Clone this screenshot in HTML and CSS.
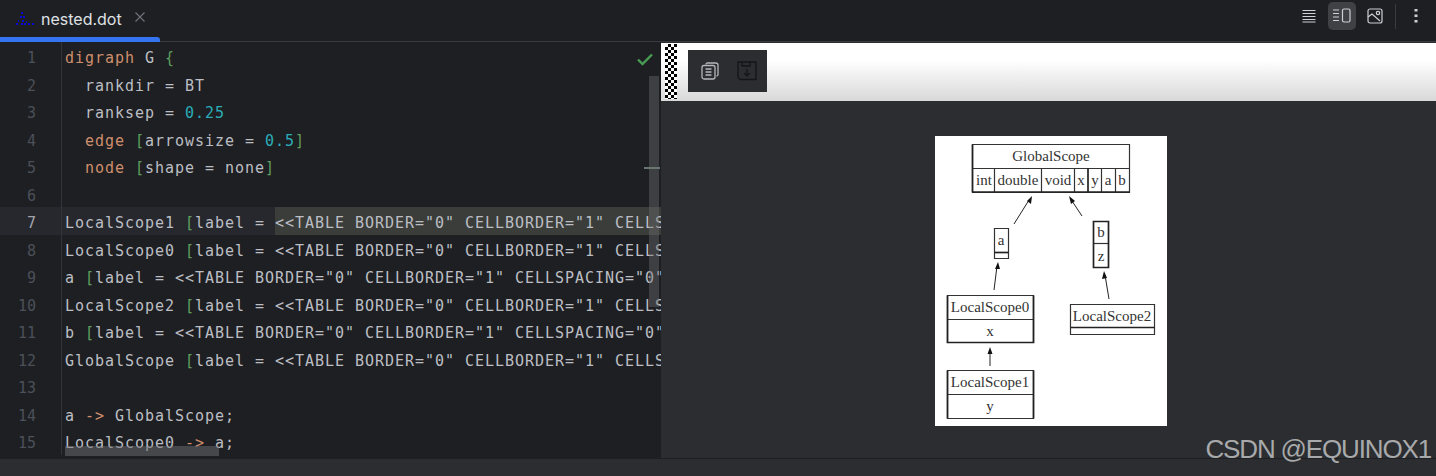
FILE: index.html
```html
<!DOCTYPE html>
<html lang="en">
<head>
    <meta charset="UTF-8">
    <title>nested.dot</title>
    <link rel="stylesheet" href="styles.css">
</head>
<body>
    <div class="app">
        <div class="tabbar">
            <div class="tab">
                <svg class="tab-icon" width="20" height="14" viewBox="0 0 20 14" fill="#0b0bd8">
                    <rect x="6" y="0" width="2" height="2"/><rect x="5" y="4" width="2" height="2"/><rect x="8" y="4" width="2" height="2"/>
                    <rect x="3" y="8" width="1" height="2"/><rect x="7" y="8" width="2" height="2"/><rect x="11" y="9" width="1" height="2"/>
                    <rect x="1" y="11" width="2" height="2"/><rect x="6" y="11" width="2" height="2"/><rect x="9" y="11" width="2" height="2"/><rect x="13" y="11" width="2" height="2"/><rect x="17" y="11" width="2" height="2"/>
                </svg>
                <span class="tab-name">nested.dot</span>
                <svg class="tab-close" width="10" height="10" viewBox="0 0 10 10" fill="none" stroke="#6f737a" stroke-width="1.1"><path d="M.5.5l9 9M9.500.5l-9 9"/></svg>
            </div>
            <div class="view-tools">
                <button class="tool">
                    <svg width="14" height="14" viewBox="0 0 14 14" stroke="#ced0d6" stroke-width="1.2"><path d="M.5 1.500h13M.5 4.500h13M.5 7.500h13M.5 10.500h13M.5 13h13"/></svg>
                </button>
                <button class="tool active">
                    <svg width="18" height="16" viewBox="0 0 18 16" fill="none" stroke="#ced0d6" stroke-width="1.2"><path d="M0 2h6M0 5.500h6M0 9h6M0 12.500h6"/><rect x="9.500" y="1" width="7.500" height="13" rx="1.500"/></svg>
                </button>
                <button class="tool">
                    <svg width="16" height="16" viewBox="0 0 16 16" fill="none" stroke="#ced0d6" stroke-width="1.2"><rect x="1" y="1" width="14" height="14" rx="2"/><path d="M1 9l4-3 8 7"/><circle cx="11" cy="5" r="1.700"/></svg>
                </button>
                <span class="tool-sep"></span>
                <button class="tool">
                    <svg width="4" height="14" viewBox="0 0 4 14" fill="#ced0d6"><rect x=".5" y="0" width="3" height="2.500"/><rect x=".5" y="5.500" width="3" height="2.500"/><rect x=".5" y="11" width="3" height="2.500"/></svg>
                </button>
            </div>
        </div>

        <div class="main">
            <div class="editor">
                <div class="row"><span class="num">1</span><span class="code"><span class="kw">digraph</span> G <span class="br">{</span></span></div>
                <div class="row"><span class="num">2</span><span class="code">  rankdir = BT</span></div>
                <div class="row"><span class="num">3</span><span class="code">  ranksep = <span class="val">0.25</span></span></div>
                <div class="row"><span class="num">4</span><span class="code">  <span class="kw">edge</span> <span class="br">[</span>arrowsize = <span class="val">0.5</span><span class="br">]</span></span></div>
                <div class="row"><span class="num">5</span><span class="code">  <span class="kw">node</span> <span class="br">[</span>shape = none<span class="br">]</span></span></div>
                <div class="row"><span class="num">6</span><span class="code"></span></div>
                <div class="row current"><span class="num">7</span><span class="code">LocalScope1 <span class="br">[</span>label = <span class="sel">&lt;&lt;TABLE BORDER="0" CELLBORDER="1" CELLSPACING="0"&gt;&lt;TR&gt;&lt;TD&gt;LocalScope1&lt;/TD&gt;&lt;/TR&gt;&lt;/TABLE&gt;&gt;</span></span></div>
                <div class="row"><span class="num">8</span><span class="code">LocalScope0 <span class="br">[</span>label = &lt;&lt;TABLE BORDER="0" CELLBORDER="1" CELLSPACING="0"&gt;</span></div>
                <div class="row"><span class="num">9</span><span class="code">a <span class="br">[</span>label = &lt;&lt;TABLE BORDER="0" CELLBORDER="1" CELLSPACING="0"&gt;&lt;TR&gt;</span></div>
                <div class="row"><span class="num">10</span><span class="code">LocalScope2 <span class="br">[</span>label = &lt;&lt;TABLE BORDER="0" CELLBORDER="1" CELLSPACING="0"&gt;</span></div>
                <div class="row"><span class="num">11</span><span class="code">b <span class="br">[</span>label = &lt;&lt;TABLE BORDER="0" CELLBORDER="1" CELLSPACING="0"&gt;&lt;TR&gt;</span></div>
                <div class="row"><span class="num">12</span><span class="code">GlobalScope <span class="br">[</span>label = &lt;&lt;TABLE BORDER="0" CELLBORDER="1" CELLSPACING="0"&gt;</span></div>
                <div class="row"><span class="num">13</span><span class="code"></span></div>
                <div class="row"><span class="num">14</span><span class="code">a <span class="kw">-&gt;</span> GlobalScope;</span></div>
                <div class="row"><span class="num">15</span><span class="code">LocalScope0 <span class="kw">-&gt;</span> a;</span></div>

                <svg class="check" width="16" height="13" viewBox="0 0 16 13" fill="none" stroke="#499c54" stroke-width="2.400"><path d="M1 6.500l4.500 4.500L15 1.500"/></svg>
                <div class="vscroll"></div>
                <div class="marker"></div>
                <div class="hscroll"></div>
            </div>

            <div class="preview">
                <div class="preview-bar">
                    <div class="checker"></div>
                    <div class="preview-tools">
                        <svg width="18" height="18" viewBox="0 0 18 18" fill="none" stroke="#b4b6ba" stroke-width="1.300"><path d="M5 2.500Q5 1 6.500 1h8Q17 1 17 3v9.500q0 1.500-1.500 1.500"/><rect x="1" y="3.500" width="13" height="13.500" rx="2" fill="#2b2d30"/><path d="M4.500 7h6M4.500 10h6M4.500 13h6" stroke-width="1.500"/></svg>
                        <svg width="20" height="20" viewBox="0 0 20 20" fill="none" stroke="#141517" stroke-width="1.300"><path d="M1 1h18v17.500H3L1 16.500zM5 1v4h8V1M10 8v7M7 12l3 3 3-3"/></svg>
                    </div>
                </div>
                <div class="preview-body">
                    <svg class="graph" width="232" height="290" viewBox="935 136 232 290">
                        <g class="cells">
                            <path d="M972.500 144.500h157v48h-157zM972.500 168.500h157M994.500 168.500v24M1041.500 168.500v24M1074.500 168.500v24M1101.500 168.500v24M1115.500 168.500v24"/>
                            <path d="M994.500 228.500h14v30h-14z"/>
                            <path d="M1093.500 243.500h15"/>
                            <path d="M947.500 295.500h86v47h-86zM947.500 319.500h86"/>
                            <path d="M947.500 370.500h86v48h-86zM947.500 394.500h86"/>
                            <path d="M1070.500 304.500h84v30h-84z"/>
                        </g>
                        <g class="cells-heavy">
                            <path d="M972.500 144.500v48M972.500 192h157M1088 168.500v24"/>
                            <path d="M994.500 252.500h14"/>
                            <path d="M1093.500 221.500h15v46h-15z"/>
                            <path d="M947.500 295.500v47h86v-47"/>
                            <path d="M947.500 370.500v48M1033.500 370.500v48"/>
                            <path d="M1070.500 327.500h84"/>
                        </g>
                        <g class="edges">
                            <path d="M1014 224l15-24"/><path d="M1082 216l-10-15"/><path d="M994 290l3-24"/><path d="M1109 299l-4-24"/><path d="M990 366v-15"/>
                        </g>
                        <g class="heads">
                            <path d="M1032 196l-1 8-4-3z"/><path d="M1069 196l6 5-4 3z"/><path d="M998 262l2 7h-5z"/><path d="M1104 271l3 7-5 1z"/><path d="M990 347l2.500 7h-5z"/>
                        </g>
                        <g class="labels">
                            <text x="1051" y="161">GlobalScope</text>
                            <text x="984" y="185">int</text><text x="1018" y="185">double</text><text x="1058" y="185">void</text><text x="1081" y="185">x</text><text x="1095" y="185">y</text><text x="1108" y="185">a</text><text x="1122" y="185">b</text>
                            <text x="1001" y="245">a</text>
                            <text x="1101" y="237">b</text><text x="1101" y="261">z</text>
                            <text x="990" y="312">LocalScope0</text><text x="990" y="336">x</text>
                            <text x="990" y="387">LocalScope1</text><text x="990" y="411">y</text>
                            <text x="1112" y="321">LocalScope2</text>
                        </g>
                    </svg>
                </div>
            </div>
        </div>

        <div class="status"></div>
        <div class="watermark">CSDN @EQUINOX1</div>
    </div>
</body>
</html>
```

FILE: styles.css
```css
body {
    margin: 0;
    background-color: #1e1f22;
    font-family: "Inter", "Liberation Sans", sans-serif;
}
button {
    padding: 0;
    border: none;
    background: none;
}
.app {
    position: relative;
    display: flex;
    flex-direction: column;
    width: 1436px;
    height: 476px;
    overflow: hidden;
}

/* tab bar */
.tabbar {
    display: flex;
    justify-content: space-between;
    flex: none;
    height: 41px;
    border-bottom: 1px solid #393b40;
    box-sizing: content-box;
}
.tab {
    position: relative;
    display: flex;
    align-items: center;
    width: 160px;
    height: 37px;
    padding-left: 15px;
    box-sizing: border-box;
}
.tab::after {
    content: "";
    position: absolute;
    left: 0;
    right: 0;
    top: 37px;
    height: 5px;
    background-color: #3574f0;
    border-radius: 0 3px 0 0;
}
.tab-icon {
    margin-right: 6px;
}
.tab-name {
    color: #dfe1e5;
    font-size: 16px;
}
.tab-close {
    margin-left: 13px;
    margin-top: -4px;
}
.view-tools {
    display: flex;
    align-items: center;
    height: 32px;
    padding-right: 6px;
}
.tool {
    display: flex;
    align-items: center;
    justify-content: center;
    width: 28px;
    height: 28px;
    margin-left: 5px;
    border-radius: 5px;
}
.tool.active {
    background-color: #3f4144;
}
.tool-sep {
    width: 1px;
    height: 25px;
    margin: 0 1px 0 6px;
    background-color: #393b40;
}

.main {
    display: flex;
    flex: 1;
    min-height: 0;
}

/* editor */
.editor {
    position: relative;
    flex: none;
    width: 661px;
    overflow: hidden;
    font-family: "DejaVu Sans Mono", monospace;
    font-size: 15px;
    letter-spacing: 0.97px;
    color: #bcbec4;
}
.row {
    display: flex;
    height: 27.5px;
    line-height: 32px;
    white-space: pre;
}
.row.current {
    background-color: #26282e;
}
.num {
    flex: none;
    width: 62px;
    padding-right: 25px;
    box-sizing: border-box;
    border-right: 1px solid #313438;
    text-align: right;
    color: #4b5059;
    letter-spacing: 0;
}
.row.current .num {
    color: #a1a3ab;
}
.code {
    padding-left: 3px;
}
.sel {
    display: inline-block;
    height: 27.5px;
    background-color: #3a3d3a;
}
.kw {
    color: #cf8e6d;
}
.br {
    color: #5f9e5f;
}
.val {
    color: #2aacb8;
}
.check {
    position: absolute;
    left: 637px;
    top: 11px;
}
.vscroll {
    position: absolute;
    left: 649px;
    top: 34px;
    width: 10px;
    height: 231px;
    background-color: rgba(110, 112, 115, 0.4);
}
.marker {
    position: absolute;
    left: 644px;
    top: 125px;
    width: 16px;
    height: 2px;
    background-color: #68786f;
}
.hscroll {
    position: absolute;
    left: 65px;
    top: 404px;
    width: 154px;
    height: 10px;
    background-color: rgba(110, 112, 115, 0.5);
}

/* preview */
.preview {
    flex: 1;
    display: flex;
    flex-direction: column;
    padding-top: 1px;
    background-color: #2b2d30;
}
.preview-bar {
    display: flex;
    align-items: flex-start;
    flex: none;
    height: 58px;
    padding: 1px 0 0 4px;
    box-sizing: border-box;
    background: linear-gradient(#ffffff, #ffffff 30%, #d8d8d8);
}
.checker {
    width: 12px;
    height: 55px;
    background: conic-gradient(#000 25%, #fff 0 50%, #000 0 75%, #fff 0) 0 0 / 6px 6px;
}
.preview-tools {
    display: flex;
    align-items: center;
    gap: 18px;
    width: 79px;
    height: 42px;
    margin: 6px 0 0 11px;
    padding-left: 13px;
    box-sizing: border-box;
    background-color: #2b2d30;
}
.preview-body {
    padding: 35px 0 0 274px;
}
.graph {
    display: block;
    background-color: #fff;
}
.cells {
    fill: none;
    stroke: #333;
    stroke-width: 1.200;
}
.cells-heavy {
    fill: none;
    stroke: #222;
    stroke-width: 1.700;
}
.edges {
    fill: none;
    stroke: #222;
    stroke-width: 1;
}
.heads {
    fill: #111;
}
.labels {
    font-family: "Liberation Serif", serif;
    font-size: 15px;
    text-anchor: middle;
    fill: #333;
}

.status {
    flex: none;
    height: 17px;
    border-top: 1px solid #1e1f22;
    background-color: #2b2d30;
}
.watermark {
    position: absolute;
    right: 5px;
    top: 433px;
    font-family: "Liberation Sans", sans-serif;
    font-size: 26px;
    letter-spacing: -1.150px;
    line-height: 32px;
    color: #a8a9ab;
    white-space: nowrap;
}
```
